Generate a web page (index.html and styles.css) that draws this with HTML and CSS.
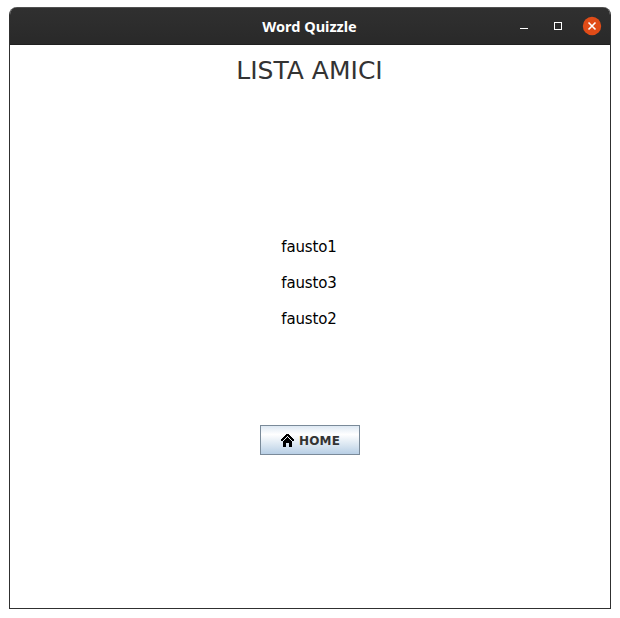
FILE: index.html
```html
<!DOCTYPE html>
<html lang="it">
<head>
<meta charset="utf-8">
<title>Word Quizzle</title>
<link rel="stylesheet" href="styles.css">
</head>
<body>
<main class="window">
  <header class="titlebar">
    <h1 class="title">Word Quizzle</h1>
    <div class="controls">
      <svg class="control" viewBox="0 0 20 20"><path d="M6 12.5h8" stroke="#fff" fill="none"/></svg>
      <svg class="control" viewBox="0 0 20 20"><rect x="6.5" y="6.5" width="7" height="7" stroke="#fff" fill="none"/></svg>
      <svg class="control" viewBox="0 0 20 20"><circle cx="10" cy="10" r="9.2" fill="#e04c18"/><path d="M6.5 6.5l7 7M13.5 6.5l-7 7" stroke="#fff" stroke-width="1.6" fill="none"/></svg>
    </div>
  </header>
  <section class="content">
    <h2 class="heading">LISTA AMICI</h2>
    <ul class="friends">
      <li>fausto1</li>
      <li>fausto3</li>
      <li>fausto2</li>
    </ul>
    <button class="home">
      <svg class="home-icon" viewBox="0 0 13 13" shape-rendering="crispEdges">
        <path d="M5 0h3v1h1v1h1v1h1v1h1v1h1v2h-2v-1h-1v-1h-1v-1h-1v-1h-1v-1h-1v1h-1v1h-1v1h-1v1h-1v1h-2v-2h1v-1h1v-1h1v-1h1v-1h1z"/>
        <path d="M6 3h1v1h1v1h1v1h1v1h1v6h-3v-4h-3v4h-3v-6h1v-1h1v-1h1v-1h1z"/>
      </svg>
      <span class="home-label">HOME</span>
    </button>
  </section>
</main>
</body>
</html>
```

FILE: styles.css
```css
* { box-sizing: border-box; }
body { margin: 0; background: #fff; font-family: "DejaVu Sans", sans-serif; }
.window { width: 602px; height: 602px; margin: 7px 0 0 9px; border: 1px solid #303030; border-top: 0; border-radius: 8px 8px 0 0; overflow: hidden; display: flex; flex-direction: column; }
.titlebar { height: 38px; flex: none; display: grid; grid-template-columns: 1fr auto 1fr; align-items: center; padding-bottom: 1px; background: linear-gradient(#303030, #292929); border-top: 1px solid #505050; border-bottom: 1px solid #202020; }
.title { grid-column: 2; margin: 0 1px 0 0; color: #fff; font: bold 14.5px/20px "Noto Sans", sans-serif; }
.controls { display: flex; justify-content: flex-end; gap: 14px; padding-right: 8px; }
.control { width: 20px; height: 20px; }
.content { flex: 1; display: flex; flex-direction: column; align-items: center; color: #333; }
.heading { margin: 11px 1px 0 0; font-size: 25px; font-weight: 400; line-height: 30px; }
.friends { list-style: none; margin: 143px 2px 0 0; padding: 0; font-size: 15px; line-height: 36px; letter-spacing: -0.15px; color: #000; }
.home { margin-top: 88px; width: 100px; height: 30px; border: 1px solid #7a8a99; background: linear-gradient(#dde8f3, #fff 30%, #b8cfe5); display: flex; align-items: center; justify-content: center; gap: 5px; padding: 1px 0 0 1px; font: bold 12px "DejaVu Sans", sans-serif; letter-spacing: 0.15px; color: #333; }
.home-icon { width: 13px; height: 13px; fill: #000; }
```
